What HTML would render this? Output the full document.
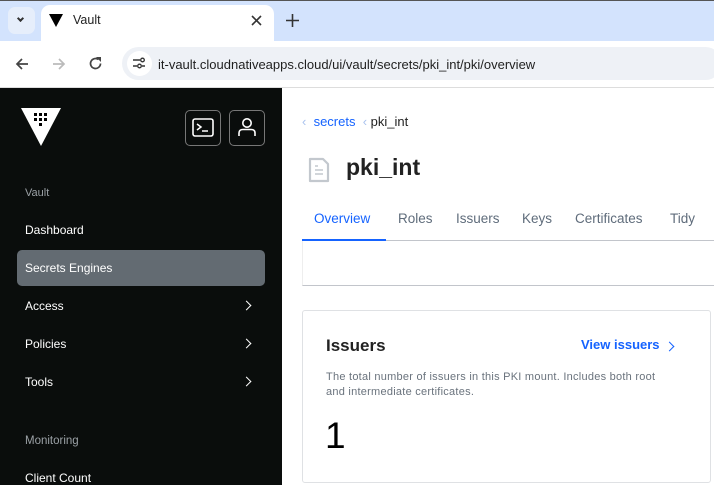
<!DOCTYPE html>
<html><head><style>
*{margin:0;padding:0;box-sizing:border-box}
body{width:714px;height:485px;overflow:hidden;font-family:"Liberation Sans",sans-serif;background:#fff;position:relative}
.a{position:absolute}
.tabs{left:0;top:0;width:714px;height:41px;background:#d3e3fd;border-top:1px solid #555}
.side{left:0;top:88px;width:282px;height:397px;background:#0a0d0c}
.nav{position:absolute;left:25px;color:#fff;font-size:12px}
.chev{position:absolute;left:243px;width:7px;height:7px;border-right:1.6px solid #fff;border-top:1.6px solid #fff;transform:rotate(45deg)}
.tab{color:#5f6c7b;font-size:13.5px;position:absolute;top:211px}
</style></head><body>
<div class="a tabs"></div>
<div class="a" style="left:8px;top:7px;width:27px;height:27px;background:#e6eefb;border-radius:7px"></div>
<div class="a" style="left:18px;top:16px;width:5px;height:5px;border-right:2px solid #333;border-bottom:2px solid #333;transform:rotate(45deg)"></div>
<div class="a" style="left:41px;top:5px;width:233px;height:36px;background:#fff;border-radius:9px 9px 0 0"></div>
<svg class="a" style="left:48px;top:12px" width="16" height="16"><polygon points="1,2 15,2 8,15" fill="#000"/></svg>
<div class="a" style="left:73px;top:13px;font-size:12.5px;color:#222">Vault</div>
<svg class="a" style="left:251px;top:15px" width="11" height="11"><path d="M1 1L10 10M10 1L1 10" stroke="#333" stroke-width="1.6"/></svg>
<svg class="a" style="left:286px;top:14px" width="13" height="13"><path d="M6.5 0V13M0 6.5H13" stroke="#333" stroke-width="1.6"/></svg>
<div class="a" style="left:0;top:41px;width:714px;height:47px;background:#fff;border-bottom:1px solid #ddd"></div>
<svg class="a" style="left:15px;top:57px" width="14" height="14"><path d="M13 7H2M7 2L2 7L7 12" stroke="#444" stroke-width="1.7" fill="none"/></svg>
<svg class="a" style="left:52px;top:57px" width="14" height="14"><path d="M1 7H12M7 2L12 7L7 12" stroke="#bbb" stroke-width="1.7" fill="none"/></svg>
<svg class="a" style="left:88px;top:56px" width="15" height="15"><path d="M12.5 7.5A5 5 0 1 1 10.5 3.5" stroke="#444" stroke-width="1.7" fill="none"/><path d="M8 1H13V6Z" fill="#444"/></svg>
<div class="a" style="left:122px;top:47px;width:600px;height:33px;background:#eef1f6;border-radius:17px"></div>
<div class="a" style="left:127px;top:51px;width:25px;height:25px;background:#fff;border-radius:50%"></div>
<svg class="a" style="left:132px;top:57px" width="14" height="12"><path d="M1 3H8M1 9H5M10 9H13" stroke="#333" stroke-width="1.5"/><circle cx="10.5" cy="3" r="1.8" fill="none" stroke="#333" stroke-width="1.3"/><circle cx="7.5" cy="9" r="1.8" fill="none" stroke="#333" stroke-width="1.3"/></svg>
<div class="a" style="left:158px;top:57px;font-size:13px;color:#1f1f1f">it-vault.cloudnativeapps.cloud/ui/vault/secrets/pki_int/pki/overview</div>
<div class="a side"></div>
<svg class="a" style="left:21px;top:108px" width="40" height="38"><polygon points="0,0 40,0 20,38" fill="#fff"/><g fill="#000"><rect x="13" y="5" width="3" height="3"/><rect x="18" y="5" width="3" height="3"/><rect x="23" y="5" width="3" height="3"/><rect x="13" y="10" width="3" height="3"/><rect x="18" y="10" width="3" height="3"/><rect x="23" y="10" width="3" height="3"/><rect x="18" y="15" width="3" height="3"/></g></svg>
<div class="a" style="left:185px;top:110px;width:36px;height:36px;border:1px solid #777;border-radius:5px"></div>
<div class="a" style="left:229px;top:110px;width:36px;height:36px;border:1px solid #777;border-radius:5px"></div>
<svg class="a" style="left:192px;top:118px" width="22" height="20"><rect x="1" y="1" width="20" height="17" rx="2" fill="none" stroke="#fff" stroke-width="1.6"/><path d="M5 6L9 9L5 12M10 13H16" stroke="#fff" stroke-width="1.5" fill="none"/></svg>
<svg class="a" style="left:237px;top:117px" width="20" height="20"><circle cx="10" cy="6" r="4.2" fill="none" stroke="#fff" stroke-width="1.6"/><path d="M2 19V16Q2 12.5 6 12.5H14Q18 12.5 18 16V19" fill="none" stroke="#fff" stroke-width="1.6"/></svg>
<div class="nav" style="top:187px;color:#9ba1a6;font-size:11px">Vault</div>
<div class="nav" style="top:223px">Dashboard</div>
<div class="a" style="left:17px;top:250px;width:248px;height:36px;background:#636b72;border-radius:5px"></div>
<div class="nav" style="top:261px">Secrets Engines</div>
<div class="nav" style="top:299px">Access</div><div class="chev" style="top:302px"></div>
<div class="nav" style="top:337px">Policies</div><div class="chev" style="top:340px"></div>
<div class="nav" style="top:375px">Tools</div><div class="chev" style="top:378px"></div>
<div class="nav" style="top:435px;color:#9ba1a6;font-size:11.5px">Monitoring</div>
<div class="nav" style="top:471px">Client Count</div>
<div class="a" style="left:302px;top:114px;font-size:13px;color:#1563ff"><span style="color:#a9c2ee">‹</span>&nbsp; secrets &nbsp;<span style="color:#a9c2ee">‹</span> <span style="color:#222">pki_int</span></div>
<svg class="a" style="left:308px;top:157px" width="22" height="26"><path d="M2 2H15L20 7V24H2Z" fill="none" stroke="#c3c8ce" stroke-width="2.2" stroke-linejoin="round"/><path d="M7 13H15M7 17H15M7 9H10" stroke="#c3c8ce" stroke-width="1.6"/></svg>
<div class="a" style="left:346px;top:154px;font-size:23px;font-weight:bold;color:#222">pki_int</div>
<div class="tab" style="left:314px;color:#1563ff">Overview</div>
<div class="tab" style="left:398px">Roles</div>
<div class="tab" style="left:456px">Issuers</div>
<div class="tab" style="left:522px">Keys</div>
<div class="tab" style="left:575px">Certificates</div>
<div class="tab" style="left:670px">Tidy</div>
<div class="a" style="left:302px;top:240px;width:412px;height:1px;background:#c2c5cb"></div>
<div class="a" style="left:302px;top:239px;width:84px;height:2px;background:#1563ff"></div>
<div class="a" style="left:302px;top:241px;width:412px;height:45px;border-left:1px solid #eee;border-bottom:1px solid #c2c5cb"></div>
<div class="a" style="left:302px;top:310px;width:409px;height:173px;border:1px solid #dfe1e4;border-radius:3px"></div>
<div class="a" style="left:326px;top:336px;font-size:17px;font-weight:bold;color:#222">Issuers</div>
<div class="a" style="left:581px;top:337px;font-size:13px;font-weight:bold;color:#1563ff">View issuers</div>
<div class="a" style="left:666px;top:343px;width:7px;height:7px;border-right:1.6px solid #1563ff;border-top:1.6px solid #1563ff;transform:rotate(45deg)"></div>
<div class="a" style="left:326px;top:370px;width:380px;font-size:11px;line-height:15px;color:#6a737d;letter-spacing:0.25px;white-space:nowrap">The total number of issuers in this PKI mount. Includes both root<br>and intermediate certificates.</div>
<div class="a" style="left:325px;top:415px;font-size:37px;color:#000">1</div>
</body></html>
